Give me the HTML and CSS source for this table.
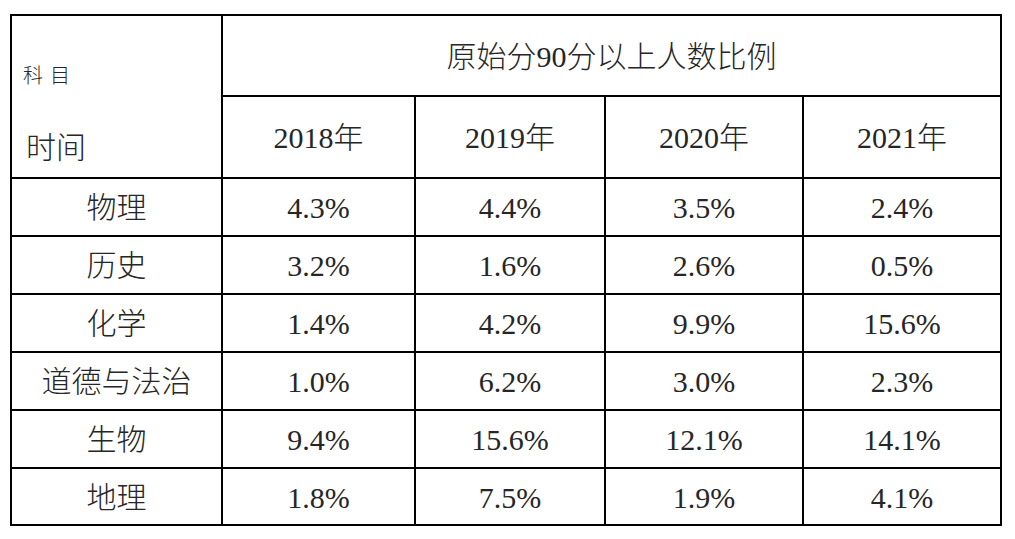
FILE: index.html
```html
<!DOCTYPE html>
<html lang="zh-CN">
<head>
<meta charset="utf-8">
<title>原始分90分以上人数比例</title>
<link rel="stylesheet" href="styles.css">
</head>
<body>
<div class="sheet">
  <div class="cell corner">
    <span class="corner-top">科目</span>
    <span class="corner-bottom">时间</span>
  </div>
  <div class="cell title">原始分90分以上人数比例</div>
  <div class="cell">2018年</div>
  <div class="cell">2019年</div>
  <div class="cell">2020年</div>
  <div class="cell">2021年</div>

  <div class="cell">物理</div>
  <div class="cell">4.3%</div>
  <div class="cell">4.4%</div>
  <div class="cell">3.5%</div>
  <div class="cell">2.4%</div>

  <div class="cell">历史</div>
  <div class="cell">3.2%</div>
  <div class="cell">1.6%</div>
  <div class="cell">2.6%</div>
  <div class="cell">0.5%</div>

  <div class="cell">化学</div>
  <div class="cell">1.4%</div>
  <div class="cell">4.2%</div>
  <div class="cell">9.9%</div>
  <div class="cell">15.6%</div>

  <div class="cell">道德与法治</div>
  <div class="cell">1.0%</div>
  <div class="cell">6.2%</div>
  <div class="cell">3.0%</div>
  <div class="cell">2.3%</div>

  <div class="cell">生物</div>
  <div class="cell">9.4%</div>
  <div class="cell">15.6%</div>
  <div class="cell">12.1%</div>
  <div class="cell">14.1%</div>

  <div class="cell">地理</div>
  <div class="cell">1.8%</div>
  <div class="cell">7.5%</div>
  <div class="cell">1.9%</div>
  <div class="cell">4.1%</div>
</div>
</body>
</html>
```

FILE: styles.css
```css
html, body {
  margin: 0;
  background: #ffffff;
}

body {
  padding: 14px 0 0 10px;
  font-family: "Liberation Serif", "Noto Sans CJK SC", serif;
  font-weight: 300;
  color: #262626;
}

.sheet {
  display: grid;
  width: 990px;
  grid-template-columns: 211px 193px 190px 198px 198px;
  grid-template-rows: 81px 82px 58px 58px 58px 58px 58px 57px;
  border-top: 2px solid #000;
  border-left: 2px solid #000;
}

.cell {
  box-sizing: border-box;
  border-right: 2px solid #000;
  border-bottom: 2px solid #000;
  display: flex;
  align-items: center;
  justify-content: center;
  font-size: 30px;
  line-height: 1;
  white-space: nowrap;
  padding-top: 2px;
}

.corner {
  grid-row: span 2;
  flex-direction: column;
  align-items: flex-start;
  justify-content: flex-start;
  padding: 0 0 0 11px;
}

.corner-top {
  font-size: 20px;
  letter-spacing: 7px;
  margin-top: 50px;
}

.corner-bottom {
  font-size: 30px;
  margin-top: 47px;
  margin-left: 3px;
}

.title {
  grid-column: span 4;
}
```
